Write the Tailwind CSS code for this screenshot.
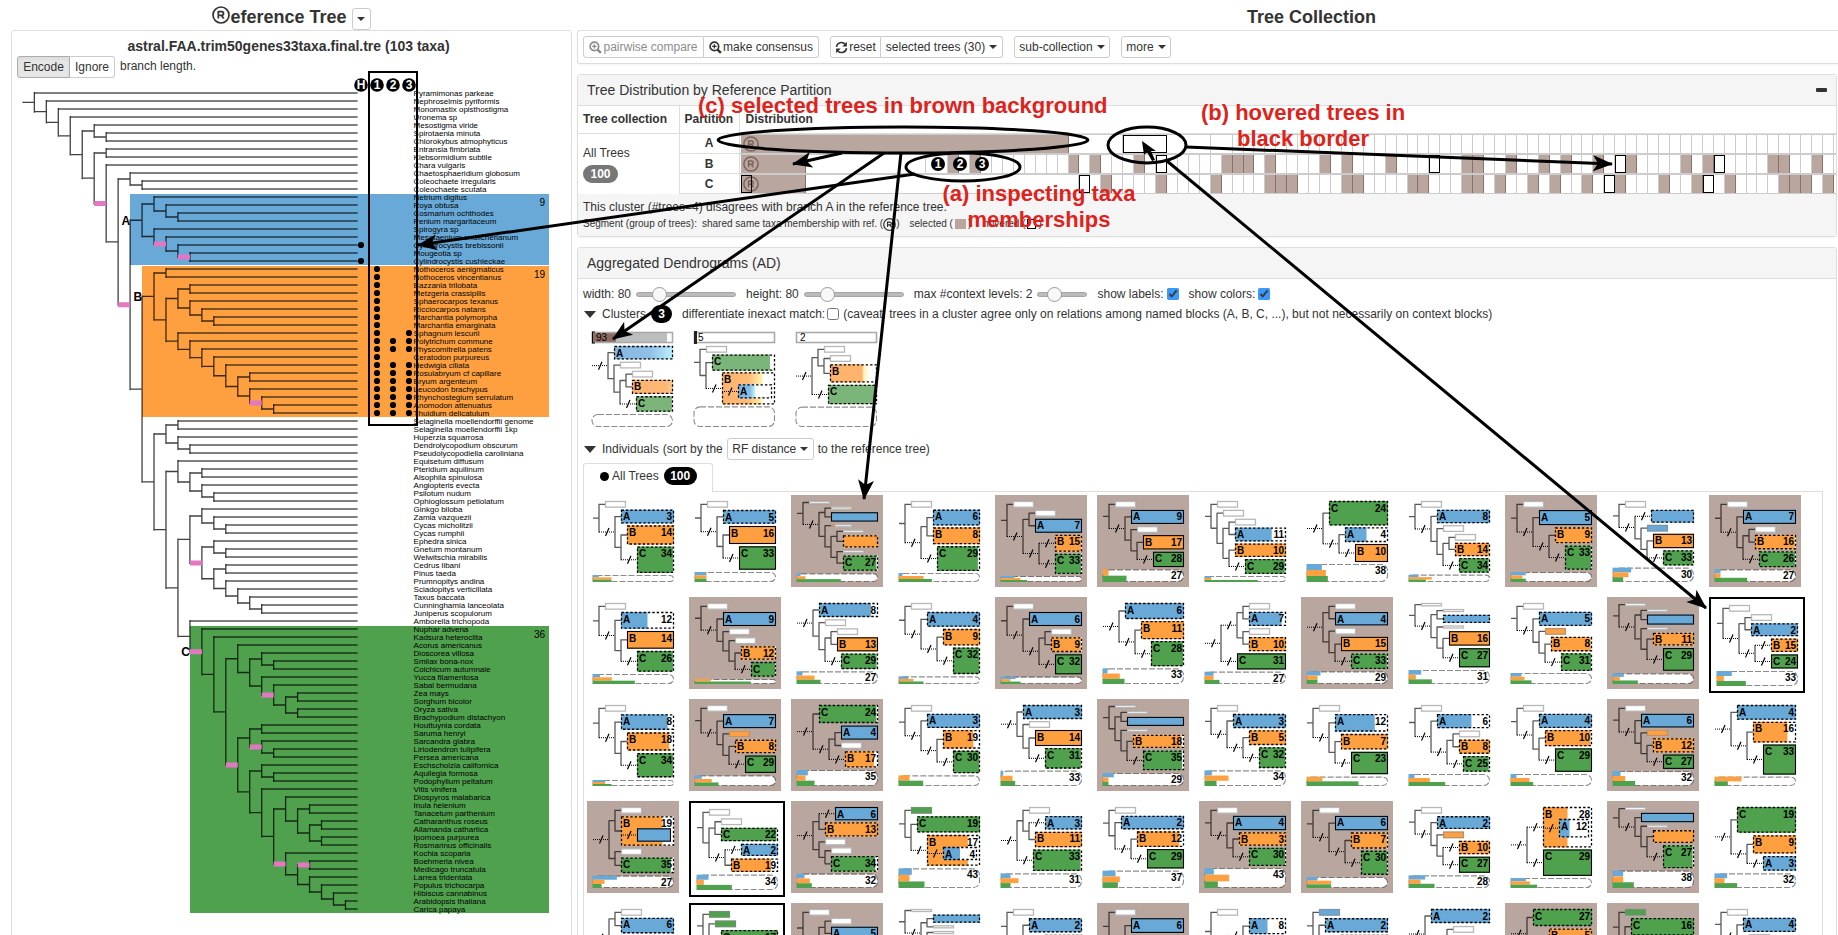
<!DOCTYPE html>
<html lang="en">
<head>
<meta charset="utf-8">
<title>Reference Tree and Tree Collection</title>
<script src="https://cdn.jsdelivr.net/npm/@tailwindcss/browser@4"></script>
</head>
<body class="relative h-screen overflow-hidden bg-white font-['Liberation_Sans',Arial,sans-serif] text-xs text-[#333]">
<svg class="absolute size-0" aria-hidden="true">
  <defs>
    <symbol id="ref" viewBox="0 0 18 18"><circle cx="9" cy="9" r="8" fill="none" stroke="currentColor" stroke-width="1.7"/><path d="M6.3 12.6V5.6H9.6a1.9 1.9 0 0 1 0 3.8H6.3M9.5 9.4l2.3 3.2" fill="none" stroke="currentColor" stroke-width="1.7"/></symbol>
    <symbol id="zoomin" viewBox="0 0 14 14"><circle cx="5.8" cy="5.8" r="4.6" fill="none" stroke="currentColor" stroke-width="1.8"/><path d="M3.4 5.8h4.8M5.8 3.4v4.8" stroke="currentColor" stroke-width="1.5"/><path d="M9.2 9.2l3.6 3.6" stroke="currentColor" stroke-width="2.6"/></symbol>
    <symbol id="refresh" viewBox="0 0 14 14"><path d="M1.6 6.4A5.3 5.3 0 0 1 11 3.6M12.4 7.6A5.3 5.3 0 0 1 3 10.4" fill="none" stroke="currentColor" stroke-width="1.7"/><path d="M12.8 .8v5H7.8zM1.2 13.2v-5h5z" fill="currentColor"/></symbol>
    <linearGradient id="gA"><stop offset="0" stop-color="#88b7de"/><stop offset=".6" stop-color="#8fc0e6"/><stop offset="1" stop-color="#bdefff"/></linearGradient>
    <linearGradient id="gA2"><stop offset="0" stop-color="#7fb2de"/><stop offset=".35" stop-color="#86bce6"/><stop offset=".5" stop-color="#c5f2ff"/><stop offset=".52" stop-color="#fff"/></linearGradient>
    <linearGradient id="gB"><stop offset="0" stop-color="#ffb36c"/><stop offset=".85" stop-color="#ffb877"/><stop offset="1" stop-color="#ffd09a"/></linearGradient>
    <linearGradient id="gB2"><stop offset="0" stop-color="#ffb36c"/><stop offset=".5" stop-color="#ffbb78"/><stop offset=".75" stop-color="#fff3a8"/><stop offset=".78" stop-color="#fff"/></linearGradient>
    <linearGradient id="gB3"><stop offset="0" stop-color="#ffb36c"/><stop offset=".68" stop-color="#ffb36c"/><stop offset=".72" stop-color="#fff3b8"/><stop offset=".85" stop-color="#fff"/></linearGradient>
  </defs>
</svg>

<div class="flex">
  <!-- Reference tree -->
  <section class="w-[577px] shrink-0 pl-[11px] pr-[5px]">
    <header class="flex h-[30px] items-center justify-center pt-1">
      <h1 class="flex items-center text-lg font-bold"><svg class="-mt-1 size-[18px]"><use href="#ref"/></svg><span>eference Tree</span></h1>
      <button class="ml-[5px] mt-1 flex h-[22px] w-[19px] items-center justify-center rounded-[3px] border border-[#ccc]" aria-label="Reference tree menu"><i class="border-x-4 border-t-4 border-x-transparent border-t-[#333]"></i></button>
    </header>
    <div class="h-[960px] rounded-[3px] border border-[#ddd]">
      <h2 class="h-[25px] pr-[6px] pt-[5px] text-center text-sm/[20px] font-bold">astral.FAA.trim50genes33taxa.final.tre (103 taxa)</h2>
      <div class="flex items-center pl-[5px]">
        <button class="h-[22px] w-[53px] rounded-l-[3px] border border-[#adadad] bg-[#e6e6e6] shadow-inner">Encode</button><button class="h-[22px] w-[45px] rounded-r-[3px] border border-l-0 border-[#ccc]">Ignore</button>
        <span class="ml-[5px] mb-[3px]">branch length.</span>
      </div>
      <svg id="tree" class="block w-[560px]" viewBox="12 78 560 850" font-family="Liberation Sans, Arial, sans-serif"></svg>
    </div>
  </section>

  <!-- Tree collection -->
  <section class="min-w-0 flex-1 pr-[1px]">
    <header class="flex h-[30px] items-center justify-center pl-[209px] pt-1"><h1 class="text-lg font-bold">Tree Collection</h1></header>
    <div class="-mr-[1px] flex h-[34px] items-center gap-[11px] rounded-l-[3px] border border-r-0 border-[#ddd] pl-[5px] shadow-xs">
      <div class="flex">
        <button class="flex h-[22px] w-[121px] items-center justify-center rounded-l-[3px] border border-[#ccc] text-[#8c8c8c]"><svg class="mr-px size-[13px]"><use href="#zoomin"/></svg>pairwise compare</button>
        <button class="flex h-[22px] w-[115px] items-center justify-center rounded-r-[3px] border border-l-0 border-[#ccc]"><svg class="mr-px size-[13px]"><use href="#zoomin"/></svg>make consensus</button>
      </div>
      <div class="flex">
        <button class="flex h-[22px] w-[51px] items-center justify-center rounded-l-[3px] border border-[#ccc]"><svg class="mr-px size-[13px]"><use href="#refresh"/></svg>reset</button>
        <button class="flex h-[22px] w-[122px] items-center justify-center gap-1 rounded-r-[3px] border border-l-0 border-[#ccc]">selected trees (30)<i class="border-x-4 border-t-4 border-x-transparent border-t-[#333]"></i></button>
      </div>
      <button class="flex h-[22px] w-[96px] items-center justify-center gap-1 rounded-[3px] border border-[#ccc]">sub-collection<i class="border-x-4 border-t-4 border-x-transparent border-t-[#333]"></i></button>
      <button class="flex h-[22px] w-[50px] items-center justify-center gap-1 rounded-[3px] border border-[#ccc]">more<i class="border-x-4 border-t-4 border-x-transparent border-t-[#333]"></i></button>
    </div>

    <div class="mt-[10px] rounded-[3px] border border-[#ddd] shadow-xs">
      <div class="flex h-[31px] items-center justify-between border-b border-[#ddd] bg-[#f5f5f5] px-[9px]">
        <h2 class="text-sm">Tree Distribution by Reference Partition</h2>
        <button class="flex h-4 w-[11px] items-center" aria-label="Collapse"><i class="h-1 w-full rounded-[1px] bg-[#333]"></i></button>
      </div>
      <table class="w-full table-fixed border-collapse">
        <colgroup><col class="w-[101px]"><col class="w-[60px]"><col></colgroup>
        <thead><tr class="h-[27px] border-b border-[#ddd] text-left"><th class="border-r border-[#ddd] pl-[5px]">Tree collection</th><th class="border-r border-[#ddd] pl-[5px]">Partition</th><th class="pl-[6px]">Distribution</th></tr></thead>
        <tbody id="dist"></tbody>
      </table>
      <div class="h-[42px] bg-[#f5f5f5] px-[5px] pt-[4px]">
        <p class="leading-[18px]">This cluster (#trees=4) disagrees with branch A in the reference tree.</p>
        <p class="flex items-center text-[10px] leading-[16px]"><span class="w-[119px]">Segment (group of trees):</span><span>shared same taxa membership with ref. (</span><svg class="size-[13px]"><use href="#ref"/></svg><span>)</span><span class="ml-[10px]">selected (</span><i class="mx-[2px] h-[10px] w-[11px] bg-[#b9a69f]"></i><span>)</span><span class="ml-[12px]">hovered (</span><i class="mx-[2px] h-[10px] w-[9px] border border-black bg-white"></i><span>)</span></p>
      </div>
    </div>

    <div class="mt-[10px] h-[760px] rounded-[3px] border border-[#ddd]">
      <div class="flex h-[31px] items-center border-b border-[#ddd] bg-[#f5f5f5] px-[9px]"><h2 class="text-sm">Aggregated Dendrograms (AD)</h2></div>
      <div class="flex h-[25px] items-center pl-[5px] pt-[5px]" id="sliders">
        <label for="w">width: 80</label><input id="w" type="range" min="0" max="100" value="18" class="ml-[5px] mr-[10px] h-[5px] w-[100px] appearance-none rounded border border-[#a5a5a5] bg-[#bbb] [&::-webkit-slider-thumb]:size-[15px] [&::-webkit-slider-thumb]:appearance-none [&::-webkit-slider-thumb]:rounded-full [&::-webkit-slider-thumb]:border [&::-webkit-slider-thumb]:border-[#999] [&::-webkit-slider-thumb]:bg-[#f8f8f8]">
        <label for="h">height: 80</label><input id="h" type="range" min="0" max="100" value="18" class="ml-[5px] mr-[10px] h-[5px] w-[100px] appearance-none rounded border border-[#a5a5a5] bg-[#bbb] [&::-webkit-slider-thumb]:size-[15px] [&::-webkit-slider-thumb]:appearance-none [&::-webkit-slider-thumb]:rounded-full [&::-webkit-slider-thumb]:border [&::-webkit-slider-thumb]:border-[#999] [&::-webkit-slider-thumb]:bg-[#f8f8f8]">
        <label for="m">max #context levels: 2</label><input id="m" type="range" min="0" max="100" value="26" class="ml-[5px] mr-[10px] h-[5px] w-[50px] appearance-none rounded border border-[#a5a5a5] bg-[#bbb] [&::-webkit-slider-thumb]:size-[15px] [&::-webkit-slider-thumb]:appearance-none [&::-webkit-slider-thumb]:rounded-full [&::-webkit-slider-thumb]:border [&::-webkit-slider-thumb]:border-[#999] [&::-webkit-slider-thumb]:bg-[#f8f8f8]">
        <label for="sl">show labels:</label><input id="sl" type="checkbox" checked class="ml-[3px] mr-[10px] size-3 accent-[#3b99fc]">
        <label for="sc">show colors:</label><input id="sc" type="checkbox" checked class="ml-[3px] size-3 accent-[#3b99fc]">
      </div>
      <div class="flex h-5 items-center pl-[6px]">
        <i class="mr-[6px] border-x-[6px] border-t-[7px] border-x-transparent border-t-[#333]"></i><span>Clusters</span><span class="ml-[5px] flex h-[18px] w-[21px] items-center justify-center rounded-full bg-black font-bold text-white">3</span>
        <label for="dm" class="ml-[10px]">differentiate inexact match:</label><input id="dm" type="checkbox" class="mx-[2px] size-3">
        <span class="ml-[2px]">(caveat: trees in a cluster agree only on relations among named blocks (A, B, C, ...), but not necessarily on context blocks)</span>
      </div>
      <div id="clusters" class="flex gap-[10px] pl-[8px] pt-[2px]"></div>
      <div class="mt-[6px] flex h-[22px] items-center pl-[6px]">
        <i class="mr-[6px] border-x-[6px] border-t-[7px] border-x-transparent border-t-[#333]"></i><span>Individuals</span><span class="ml-[4px]">(sort by the</span>
        <button class="mx-[4px] flex h-[22px] w-[87px] items-center justify-center gap-1 rounded-[3px] border border-[#ccc]">RF distance<i class="border-x-4 border-t-4 border-x-transparent border-t-[#333]"></i></button><span>to the reference tree)</span>
      </div>
      <div class="ml-[5px] mr-[13px] mt-[3px]">
        <button class="relative z-10 flex h-[29px] w-[130px] items-center whitespace-nowrap rounded-t-[3px] border border-b-0 border-[#ddd] bg-white pb-1 pl-4 text-[#333]"><i class="mr-[3px] size-[9px] rounded-full bg-black"></i>All Trees<span class="ml-[5px] flex h-[18px] w-[33px] items-center justify-center rounded-full bg-black font-bold text-white">100</span></button>
        <div id="grid" class="-mt-px grid grid-cols-[repeat(auto-fill,102px)] border border-[#ddd] pl-[3px] pt-[3px]"></div>
      </div>
    </div>
  </section>
</div>

<!-- Annotations over the page -->
<svg class="pointer-events-none absolute left-0 top-0 h-[935px] w-[1838px]" viewBox="0 0 1838 935" font-family="Liberation Sans, Arial, sans-serif">
  <defs><marker id="head" markerUnits="userSpaceOnUse" markerWidth="24" markerHeight="20" refX="19" refY="9" orient="auto"><path d="M20 9L0 1L5 9L0 17z"/></marker></defs>
  <g fill="none" stroke="#000" stroke-width="3">
    <rect x="369" y="72" width="48" height="353" stroke-width="2"/>
    <ellipse cx="903" cy="140" rx="185" ry="13"/>
    <ellipse cx="963" cy="167" rx="57" ry="14"/>
    <ellipse cx="1147" cy="145" rx="39" ry="18"/>
    <g marker-end="url(#head)">
      <path d="M842 153L793 164"/><path d="M884 153L613 339"/><path d="M901 153L864 499"/><path d="M915 174L418 245"/><path d="M1186 147L1612 164"/><path d="M1167 161L1706 608"/>
    </g>
  </g>
  <path d="M1142 141l2 14 3-3 5 9 3-1-4-9 5 0z"/>
  <g id="marks"></g>
  <g fill="#de231c" font-size="22" font-weight="700">
    <text x="698" y="113">(c) selected trees in brown background</text>
    <text x="1039" y="201" text-anchor="middle">(a) inspecting taxa</text><text x="1039" y="227" text-anchor="middle">memberships</text>
    <text x="1303" y="120" text-anchor="middle">(b) hovered trees in</text><text x="1303" y="146" text-anchor="middle">black border</text>
  </g>
</svg>

<script>
const COL = {A:'#68a9d8', B:'#ffa040', C:'#4fa14d'};
const names = `Pyramimonas parkeae|Nephroselmis pyriformis|Monomastix opisthostigma|Uronema sp|Mesostigma viride|Spirotaenia minuta|Chlorokybus atmophyticus|Entransia fimbriata|Klebsormidium subtile|Chara vulgaris|Chaetosphaeridium globosum|Coleochaete irregularis|Coleochaete scutata|Netrium digitus|Roya obtusa|Cosmarium ochthodes|Penium margaritaceum|Spirogyra sp|Mesotaenium endlicherianum|Cylindrocystis brebissonii|Mougeotia sp|Cylindrocystis cushleckae|Nothoceros aenigmaticus|Nothoceros vincentianus|Bazzania trilobata|Metzgeria crassipilis|Sphaerocarpos texanus|Ricciocarpos natans|Marchantia polymorpha|Marchantia emarginata|Sphagnum lescurii|Polytrichum commune|Physcomitrella patens|Ceratodon purpureus|Hedwigia ciliata|Rosulabryum cf capillare|Bryum argenteum|Leucodon brachypus|Rhynchostegium serrulatum|Anomodon attenuatus|Thuidium delicatulum|Selaginella moellendorffii genome|Selaginella moellendorffii 1kp|Huperzia squarrosa|Dendrolycopodium obscurum|Pseudolycopodiella caroliniana|Equisetum diffusum|Pteridium aquilinum|Alsophila spinulosa|Angiopteris evecta|Psilotum nudum|Ophioglossum petiolatum|Ginkgo biloba|Zamia vazquezii|Cycas micholitzii|Cycas rumphii|Ephedra sinica|Gnetum montanum|Welwitschia mirabilis|Cedrus libani|Pinus taeda|Prumnopitys andina|Sciadopitys verticillata|Taxus baccata|Cunninghamia lanceolata|Juniperus scopulorum|Amborella trichopoda|Nuphar advena|Kadsura heteroclita|Acorus americanus|Dioscorea villosa|Smilax bona-nox|Colchicum autumnale|Yucca filamentosa|Sabal bermudana|Zea mays|Sorghum bicolor|Oryza sativa|Brachypodium distachyon|Houttuynia cordata|Saruma henryi|Sarcandra glabra|Liriodendron tulipifera|Persea americana|Eschscholzia californica|Aquilegia formosa|Podophyllum peltatum|Vitis vinifera|Diospyros malabarica|Inula helenium|Tanacetum parthenium|Catharanthus roseus|Allamanda cathartica|Ipomoea purpurea|Rosmarinus officinalis|Kochia scoparia|Boehmeria nivea|Medicago truncatula|Larrea tridentata|Populus trichocarpa|Hibiscus cannabinus|Arabidopsis thaliana|Carica papaya`.split('|');

// Reference tree topology: 0 is a leaf, [a, b] a split, p() marks a low-support (pink) branch.
const p = n => { n.pink = true; return n; };
const nm = (l, n) => { n.name = l; return n; };
const c2 = () => [0,0], c3 = () => [0,c2()];
const cladeA = nm('A', [[0,c3()], [0, p([0,[0,p(c2())]])]]);
const cladeB = nm('B', [c2(), [[c2(),[0,c3()]], [0,[0,[0,[0,[0,[c2(),[0,p(c3())]]]]]]]]]);
const monocots = [0, [c3(), [0, p([0,[c2(),c2()]])]]];
const asterids = [0, [c2(), [c2(),c2()]]];
const rosids = p([0, [p(c2()), [0,[0,[0,c2()]]]]]);
const eudicots = [c3(), [0, [asterids, rosids]]];
const cladeC = p(nm('C', [0, [0, [monocots, p([[c2(), p(c3())], eudicots])]]]));
const conifers = [c2(), [0,[0,[0,c2()]]]];
const gymno = [[0,c3()], p([c3(), conifers])];
const ferns = [0, [c2(), c3()]];
const vascular = [[c2(),c3()], [ferns, [gymno, [0, cladeC]]]];
const root = [0,[0,[0,[0,[[0,c2()], [c2(), p([0, [[0,c2()], p([cladeA, [cladeB, vascular]])]])]]]]]];

(function drawTree() {
  const X = d => 22.4 + 11.965 * d, Y = i => 93 + 8 * i;
  let leaf = 0, thin = '', thick = '', pink = '', labels = '';
  function walk(n, d) {
    if (n === 0) { const y = Y(leaf++); thick += `M${X(d)} ${y}H357.6`; return y; }
    const a = walk(n[0], d + 1), b = walk(n[1], d + 1), y = (a + b) / 2;
    thin += `M${X(d+1)} ${a - 1}V${b + 1}`;
    if (n.pink) pink += `M${X(d)} ${y}H${X(d+1)}`; else thin += `M${X(d)} ${y}H${X(d+1)}`;
    if (n.name) labels += `<text x="${X(d)}" y="${y + 4.5}" text-anchor="end" font-size="12" font-weight="700">${n.name}</text>`;
    return y;
  }
  walk(root, 0);
  let s = `<rect x="130" y="194" width="419" height="71" fill="${COL.A}"/><rect x="142" y="266" width="407" height="151" fill="${COL.B}"/><rect x="190" y="626" width="359" height="287" fill="${COL.C}"/>`;
  s += `<path d="${thick}" stroke="#000" stroke-opacity=".5" stroke-width="2"/><path d="${thin}" stroke="#000" stroke-opacity=".75" stroke-width="1.3" fill="none"/><path d="${pink}" stroke="#e377c2" stroke-width="5"/>${labels}`;
  names.forEach((t, i) => s += `<text x="413.6" y="${Y(i) + 3}" font-size="8">${t}</text>`);
  [['9',206],['19',278],['36',638]].forEach(([t, y]) => s += `<text x="545" y="${y}" text-anchor="end" font-size="10">${t}</text>`);
  const dot = (x, n) => s += `<circle cx="${x}" cy="${Y(n-1)}" r="3.1"/>`;
  dot(361,20); dot(361,22);
  for (let n = 23; n <= 41; n++) { dot(377, n); if (n > 30 && n !== 34) { dot(409, n); if (n > 31) dot(393, n); } }
  [['H',361],['1',377],['2',393],['3',409]].forEach(([t, x]) => s += `<circle cx="${x}" cy="85" r="6.8"/><text x="${x}" y="89" text-anchor="middle" font-size="12" font-weight="700" fill="#fff">${t}</text>`);
  document.getElementById('tree').innerHTML = s;
  document.getElementById('marks').innerHTML = [['1',938],['2',960],['3',982]].map(([t, x]) => `<circle cx="${x}" cy="164" r="7"/><text x="${x}" y="168" text-anchor="middle" font-size="12" font-weight="700" fill="#fff">${t}</text>`).join('');
})();

(function distribution() {
  const rows = {
    A: {groups:[[0,30],[30,5],[35,4],[39,4],[43,2]], from:45, sel:[0], hov:[35]},
    B: {groups:[[0,6],[6,11],[17,2]], from:19, sel:[0,19,21,30,32,36,44,45,46,48,53,55,59,66,67,70,73,75,78,81,86,88,94,95,98], hov:[38,63,80,89]},
    C: {groups:[[0,6],[6,25]], from:31, sel:[0,33,38,43,48,49,50,55,56,61,62,66,67,69,72,74,77,80,84,87,90,95,96,97,99], hov:[31,79,88]}
  };
  let html = '';
  for (const [k, r] of Object.entries(rows)) {
    const g = r.groups.slice();
    for (let i = r.from; i < 100; i++) g.push([i, 1]);
    const segs = g.map(([i, n]) => {
      const cls = r.hov.includes(i) ? 'border border-black bg-white' : r.sel.includes(i) ? 'border-r border-[#8f6f67] bg-[#b9a69f]' : 'border-r border-[#ccc] bg-white';
      return `<i class="${cls}" style="grid-column:span ${n}"></i>`;
    }).join('');
    html += `<tr class="h-5">${k === 'A' ? '<td rowspan="3" class="border-r border-[#ddd] pl-[5px] align-middle">All Trees<br><span class="mt-1 flex h-[18px] w-[35px] items-center justify-center rounded-full bg-[#777] font-bold text-white">100</span></td>' : ''}<td class="border-r border-b border-[#ddd] text-center font-bold">${k}</td><td class="p-0"><div class="relative grid h-5 grid-cols-[repeat(100,minmax(0,1fr))] border-y border-[#ccc] pr-[2px] pl-px">${segs}<svg class="absolute left-[3px] top-px size-4 text-[#7d625b]"><use href="#ref"/></svg>${k === 'C' ? '<i class="absolute left-px top-0 h-full w-[11px] border border-black"></i>' : ''}</div></td></tr>`;
  }
  document.getElementById('dist').innerHTML = html;
})();

/* Aggregated dendrograms.
   Spec: ( ) split, ~ elided branch, x context block, A/B/C named block with
   d|s outline, height in thirds of a pixel, #count, %filled, @colour of context, > nested block. */
function dendro(spec, bottom, bars, num, o = {}) {
  const grad = o.grad;
  const tok = spec.match(/~|\(|\)|[^\s~()]+/g); let k = 0;
  const leaves = [];
  function parse() {
    let el = false; if (tok[k] === '~') { el = true; k++; }
    if (tok[k] === '(') { k++; const kids = []; while (tok[k] !== ')') kids.push(parse()); k++; return {kids, el}; }
    const [own, inner] = tok[k++].split('>');
    const rd = t => { const m = t.match(/^([ABCx])([ds]?)(\d*)(?:#(\d+))?(-)?(?:%(\d+))?(?:@([ABC])(\d+))?/); return {t:m[1], solid:m[2] === 's', h:(+m[3] || 20) / 3, n:m[4], blank:!!m[5], f:+(m[6] || 100) / 100, cc:m[7], cf:+(m[8] || 0) / 100}; };
    const L = rd(own); L.el = el; if (inner) L.inner = rd(inner);
    leaves.push(L); return L;
  }
  const tree = parse();
  const P = 6, R = 87, top = o.top || 0;
  const gap = (81 - bottom / 3 - leaves.reduce((a, l) => a + l.h, 0)) / leaves.length;
  let y = P + top; leaves.forEach(l => { l.y = y; y += l.h + gap; });
  let line = '', dotted = '', slash = '', box = '';
  const branch = (x, yy, el) => {
    if (!el) { line += `M${x} ${yy}h6`; return x + 6; }
    dotted += `M${x} ${yy}h16`; slash += `M${x + 6.5} ${yy + 4}L${x + 10} ${yy - 4}`; return x + 16;
  };
  function block(b, x, by, r) {
    const w = r - x, fill = grad ? (grad[b.t] || '#7bb57a') : COL[b.t];
    let s = `<rect x="${x}" y="${by}" width="${w}" height="${b.h}" fill="#fff"/><rect x="${x}" y="${by}" width="${w * b.f}" height="${b.h}" fill="${fill}"/>`;
    s += `<rect x="${x + .5}" y="${by + .5}" width="${w - 1}" height="${b.h - 1}" fill="none" stroke="#000" stroke-width="${b.solid ? 1.1 : 1.3}" ${b.solid ? '' : 'stroke-dasharray="2.4 2"'}/>`;
    if (!b.blank) s += `<text x="${x + 2}" y="${by + 10.5}">${b.t}</text>`;
    if (b.n) s += `<text x="${r - 2}" y="${by + 10.5}" text-anchor="end">${b.n}</text>`;
    return s;
  }
  function center(n) { if (!n.kids) return n.c = n.y + n.h / 2; const c = n.kids.map(center); return n.c = (c[0] + c[c.length - 1]) / 2; }
  center(tree);
  function draw(n, x) {
    const e = branch(x, n.c, n.el);
    if (n.kids) { line += `M${e} ${n.kids[0].c - .5}V${n.kids[n.kids.length - 1].c + .5}`; n.kids.forEach(q => draw(q, e)); return; }
    if (n.t === 'x') {
      box += `<rect x="${e}" y="${n.y}" width="21" height="${n.h}" fill="#fff"/>${n.cc ? `<rect x="${e}" y="${n.y}" width="${21 * n.cf}" height="${n.h}" fill="${COL[n.cc]}"/>` : ''}<rect x="${e + .5}" y="${n.y + .5}" width="20" height="${n.h - 1}" fill="none" stroke="#888" stroke-opacity=".6" stroke-width="1.3"/>`;
      return;
    }
    box += block(n, e, n.y, R);
    if (n.inner) {
      const iy = n.y + 12, c = iy + n.inner.h / 2;
      box += `<path d="M${e} ${c}h16" stroke="#000" stroke-dasharray="1 1"/><path d="M${e + 6.5} ${c + 4}l3.5 -8" stroke="#000" stroke-width="1.2"/>`;
      box += block(n.inner, e + 16, iy, R - 3);
    }
  }
  draw(tree, P);
  const bh = bottom / 3, b0 = P + top + 81 - bh;
  let s = `<path d="${line}" stroke="#000" stroke-opacity=".65" stroke-width="1.3" fill="none"/><path d="${dotted}" stroke="#000" stroke-width="1" stroke-dasharray="1 1"/><path d="${slash}" stroke="#000" stroke-width="1.2"/>${box}`;
  s += `<rect x="${P}" y="${b0 + .5}" width="80.5" height="${bh - 1}" rx="${Math.min(6, bh / 2)}" fill="#fff" stroke="#000" stroke-opacity=".45" stroke-width="1.1" stroke-dasharray="6 2"/>`;
  const act = ['A','B','C'].map((c, i) => [c, bars[i]]).filter(q => q[1] > 0);
  act.forEach(([c, w], i) => s += `<rect x="${P - .5}" y="${b0 + i * bh / act.length}" width="${w / 3}" height="${bh / act.length}" fill="${COL[c]}"/>`);
  if (num) s += `<text x="85" y="${b0 + 10}" text-anchor="end">${num}</text>`;
  return `<svg class="block w-[92px]" viewBox="0 0 92 ${92 + top}" font-family="Liberation Sans, Arial, sans-serif" font-size="10" font-weight="700">${o.head || ''}${s}</svg>`;
}

const cl = [
  ['~( Ad40 ( x ( ( x Bd42 ) ~Cd46%97 ) ) )', 39, {A:'url(#gA)', B:'url(#gB)'}, '<rect x="6" y="6" width="24" height="11" fill="#8f6a60"/><rect x="30" y="6" width="51" height="11" fill="#bdbdbd"/>', '93'],
  ['( x ( Cd48%92 ~Bd96>Ad42 ) )', 62, {A:'url(#gA2)', B:'url(#gB2)'}, '', '5'],
  ['~( ( x ( x Bd54 ) ) ~Cd58%97 )', 61, {B:'url(#gB3)'}, '', '2']
];
document.getElementById('clusters').innerHTML = cl.map(([s, b, g, bg, n]) =>
  dendro(s, b, [0,0,0], 0, {grad:g, top:14, head:`${bg}<rect x="6.5" y="6.5" width="80" height="10" fill="none" stroke="#aaa" stroke-width="1.6"/>${n === '5' ? '<rect x="6" y="5" width="3" height="13" fill="#222"/>' : ''}${n === '93' ? '<path d="M9 6H6.5V17H9" fill="none" stroke="#000" stroke-width="1.2"/>' : ''}<text x="10" y="15" font-weight="400">${n}</text>`})).join('');

// [spec, footer height, footer bars, footer count, state: s selected / h hovered]
const cells = [
 ['( x ~( Ad41#3 ( Bd57#14 ~Cd79#34%97 ) ) )',21,[19,57,57]],
 ['( x ~( Ad41#5 ( Bs54#16 ~Cs70#33 ) ) )',30,[36,36,36]],
 ['( x9 ~( ( x9 As28- ) ( x9@B20 ( ( x9 Bd36- ) ( x9 Cd45#27%95 ) ) ) ) )',26,[12,27,133],0,'s'],
 ['( x ~( ( Ad47#6 Bd50#8 ) ~Cd74#29%95 ) )',27,[12,75,100]],
 ['( x ~( ( x As42#7 ) ~( ~Bd50#15%97 ~Cd60#33%96 ) ) )',18,[42,60,80],0,'s'],
 ['( x ~( As42#9 ( x ( Bs43#17 ~Cs46#28 ) ) ) )',38,[0,18,72],27,'s'],
 ['( x ( x ( ( x Ad41#11%72 ) ( Bd40#10 ~Cd44#29%97 ) ) ) )',18,[20,20,160]],
 ['~( Cd73#24 ~( Ad44#4%50 ~Bs54#10 ) )',54,[46,58,64],38],
 ['( x ~( Ad40#8 ( x ( ( x Bd40#14%97 ) ~Cd43#34%95 ) ) ) )',22,[30,70,52]],
 ['( x ~( As45#5 ~( Bd47#9 ~Cd72#33%97 ) ) )',30,[46,36,46],0,'s'],
 ['( x ~( ~Ad38- ( x@A100 ( Bs43#13 ~Cd45#33%96 ) ) ) )',43,[56,48,32],30],
 ['( x ~( As42#7 ( ( x Bd43#16%97 ) ~Cd47#26%97 ) ) )',38,[18,18,98],27,'s'],

 ['( x ~( Ad50#12%50 ( Bs53#14 ~Cd62#26%97 ) ) )',30,[23,58,127]],
 ['( x ~( As42#9 ( x ( x ( Bd40#12%97 ~Cd44%97 ) ) ) ) )',15,[0,49,169],0,'s'],
 ['~( Ad42#8%88 ( x ( ( x Bs42#13 ) ~Cd46#29%96 ) ) )',38,[18,54,72],27],
 ['( x ~( Ad44#4 ~( Bd49#9 ~Cd79#32%97 ) ) )',23,[30,45,75]],
 ['( x ~( As42#6 ~( ( x Bd44#9%96 ) ~Cs60#32 ) ) )',22,[45,30,60],0,'s'],
 ['~( Ad48#6 ~( Bd54#11 ~Cd75#28%97 ) )',47,[15,52,66],33],
 ['~( ~( ( x Ad42#7%88 ) ( x Bd42#10 ) ) ~Cs48#31 )',37,[27,27,45],27],
 ['~( ( x As40#4 ) ( x ( Bs43#15 ~Cd46#33%97 ) ) )',38,[42,33,33],29,'s'],
 ['( x10 ~( ( x9 Ad24- ) ( x9 ( Bs43#16 ~Cs57#27 ) ) ) )',42,[38,22,70],31],
 ['( x ~( Ad42#5 ( x@B100 ( Bd43#8%97 ~Cd52#31%97 ) ) ) )',33,[33,42,63]],
 ['( x10 ~( ( x9 As30- ) ( x9 ( Bd38#11 ~Cs68#29 ) ) ) )',32,[34,22,76],0,'s'],
 ['( x ~( ( x Ad38#2 ) ~( ~Bd40#15 ~Cs42#24 ) ) )',45,[46,22,88],33,'h'],

 ['( x ~( Ad46#8%88 ( Bd54#18%90 ~Cd72#34%97 ) ) )',18,[38,38,57]],
 ['( x ~( As42#7 ( x@B100 ( Bd40#8 ~Cs52#29 ) ) ) )',32,[22,52,72],0,'s'],
 ['~( Cd54#24%97 ~( ( As42#4 x ) ~Bd48#17%88 ) )',48,[34,27,54],35,'s'],
 ['( x ~( Ad42#3 ~( Bd55#19%82 ~Cd67#30%97 ) ) )',32,[0,33,74]],
 ['~( Ad42#3 ( x ( Bs48#14 ~Cd61#31%97 ) ) )',46,[8,36,44],33],
 ['( x9 ( ( x9 As27- ) ( x9 ( Bd39#18%95 ~Cd58#35%95 ) ) ) )',39,[34,18,18],29,'s'],
 ['( x ~( Ad42#3 ~( Bd44#5 ~Cd62#32%97 ) ) )',47,[22,72,36],34],
 ['( x ~( Ad52#12%75 ( Bd46#7 ~Cs67#23 ) ) )',28,[0,48,156]],
 ['( x ~( Ad42#6%65 ~( ( x Bd42#8 ) ~Cd46#25%95 ) ) )',36,[18,64,110]],
 ['( x ~( Ad42#4 ( Bd48#10%97 ~Cs70#29 ) ) )',36,[18,57,68]],
 ['( x ~( As41#6 ( x@B100 ( Bd42#12 ~Cs43#27 ) ) ) )',45,[24,38,68],32,'s'],
 ['~( Ad44#4 ~( Bd62#16%80 ~Cs90#33 ) )',28,[0,81,40]],

 ['~( ( x Bd88#19%78>As40- ) ( x Cd46#35%94 ) )',37,[73,36,27],27,'s'],
 ['( x ( ( x Cd40#22%97 ) ~( ~Ad36#2 Bd40#19%85 ) ) )',46,[36,22,106],34,'h'],
 ['~( ( ~As40#6 Bd42#13 ) ( x ( x Cd46#34%94 ) ) )',43,[24,40,46],32,'s'],
 ['( x@C100 ( Cd48#19 ~Bd92#17%77>Ad39#4%50 ) )',59,[40,33,78],43],
 ['~( ( x ( ~Ad40#3 Bd46#11 ) ) ~Cd64#33%97 )',44,[30,54,30],31],
 ['( x ( Ad40#2 ~( Bd46#12%90 ~Cs58#29 ) ) )',52,[39,52,46],37],
 ['( x ~( As43#4 ( Bd40#3 ~Cd54#30%97 ) ) )',60,[28,74,40],43,'s'],
 ['( x ~( As43#6 ~( Bd48#7%97 ~Cd72#30%97 ) ) )',33,[33,74,74],0,'s'],
 ['( x ~( Ad38#2 ( x@B100 ( ~Bd40#10 ~Cs48#27 ) ) ) )',38,[50,36,78],28],
 ['~( ~Bd121#28%50>Ad55#12%35 ~Cs79#29 )',30,[46,58,80]],
 ['( x10 ~( As28- ( x9 ( Bd38- ~Cd68#27%95 ) ) ) )',52,[32,32,64],38,'s'],
 ['~( Cd77#19 ~( Bd54#9 ~Ad43#3 ) )',44,[38,30,68],32],

 ['~( ( x Ad46#6 ) ( Bd60#14 ~Cd60#30 ) )',30,[20,30,40]],
 ['( x@C100 ( x@C100 ( Cd45#17 ( Bd45#9 ~Ad40#3 ) ) ) )',30,[20,30,40],0,'h'],
 ['( x ~( ( x As40#5 ) ( Bd50#11 ~Cd50#30 ) ) )',30,[20,30,40],0,'s'],
 ['( x9 ~( ( Ad24- x9 ) ( x9 ( Bd44#12 ~Cd60#30 ) ) ) )',40,[20,30,40]],
 ['( x ~( Ad42#2 ~( Bd55#10 ~Cd65#30 ) ) )',30,[20,30,40]],
 ['( x ~( As44#6 ( Bs52#12 ~Cd62#30 ) ) )',34,[20,30,40],0,'s'],
 ['( x ~( ~( Ad48#8%50 Bd50#10 ) ~Cd62#30 ) )',34,[20,30,40]],
 ['( x@A100 ( Ad42#2 ~( Bd50#8 ~Cd62#30 ) ) )',38,[20,30,40]],
 ['~( Ad42#2 ~( ( x Bd54#12 ) ~Cd60#30 ) )',30,[20,30,40]],
 ['~( Cd51#27 ~( Bd60#5 ~Ad60#4 ) )',48,[20,30,40],0,'s'],
 ['( x@C100 ( Cd52#16 ( Bd54#10 ~Ad50#4 ) ) )',38,[20,30,40],0,'s'],
 ['( x ~( Ad42#4 ( x ( Bd44#12 ~Cd46#30 ) ) ) )',38,[20,30,40]]
];
const state = {s:'size-[92px] bg-[#b9a69f]', h:'size-24 border-2 border-black'};
document.getElementById('grid').innerHTML = cells.map(c => `<div class="h-[102px]"><div class="${state[c[4]] || 'size-[92px]'}">${dendro(c[0], c[1], c[2], c[3])}</div></div>`).join('');
</script>
</body>
</html>
